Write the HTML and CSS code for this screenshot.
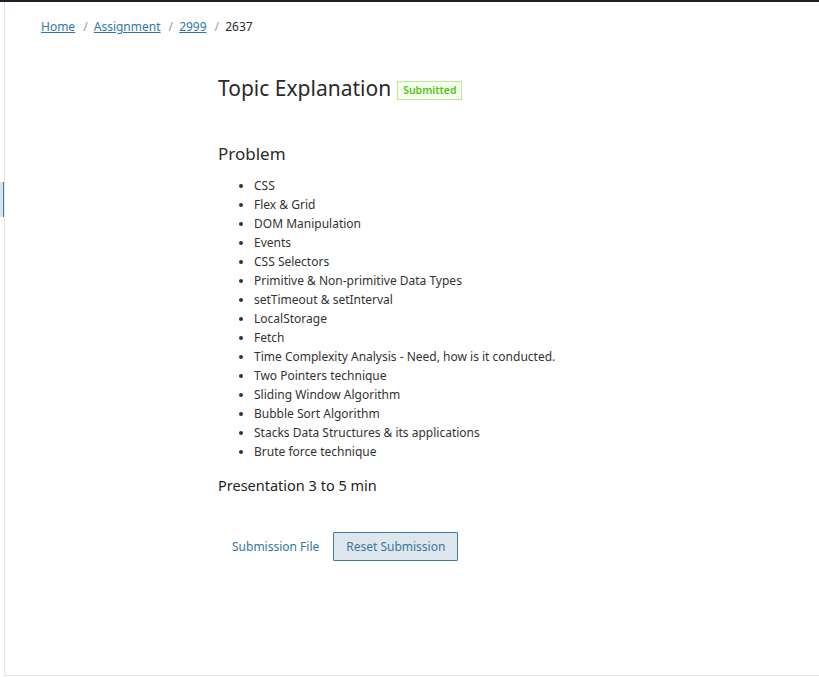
FILE: index.html
```html
<!DOCTYPE html>
<html>
<head>
<meta charset="utf-8">
<link rel="stylesheet" href="styles.css">
</head>
<body>
<div class="topbar"></div>
<div class="frame">
  <div class="side-tab"></div>
  <nav class="crumbs">
    <a href="#">Home</a><span class="sep">/</span>
    <a href="#">Assignment</a><span class="sep">/</span>
    <a href="#">2999</a><span class="sep">/</span>
    <span class="current">2637</span>
  </nav>
  <main class="content">
    <div class="title-row">
      <h1 class="title">Topic Explanation</h1>
      <span class="tag">Submitted</span>
    </div>
    <h2 class="section">Problem</h2>
    <ul class="topics">
      <li>CSS</li>
      <li>Flex &amp; Grid</li>
      <li>DOM Manipulation</li>
      <li>Events</li>
      <li>CSS Selectors</li>
      <li>Primitive &amp; Non-primitive Data Types</li>
      <li>setTimeout &amp; setInterval</li>
      <li>LocalStorage</li>
      <li>Fetch</li>
      <li>Time Complexity Analysis - Need, how is it conducted.</li>
      <li>Two Pointers technique</li>
      <li>Sliding Window Algorithm</li>
      <li>Bubble Sort Algorithm</li>
      <li>Stacks Data Structures &amp; its applications</li>
      <li>Brute force technique</li>
    </ul>
    <p class="duration">Presentation 3 to 5 min</p>
    <div class="actions">
      <button class="btn-link">Submission File</button>
      <button class="btn-reset">Reset Submission</button>
    </div>
  </main>
</div>
</body>
</html>
```

FILE: styles.css
```css
html, body {
  margin: 0;
  padding: 0;
  background: #ffffff;
}
body {
  font-family: "Noto Sans", "Open Sans", sans-serif;
  color: #2b2b2b;
  width: 819px;
  height: 677px;
  overflow: hidden;
}
.topbar {
  height: 2px;
  background: #1b2329;
}
.frame {
  position: relative;
  margin-left: 4px;
  height: 673px;
  border-left: 1px solid #e4e3f5;
  border-bottom: 1px solid #e6e6e6;
}
.side-tab {
  position: absolute;
  left: -5px;
  top: 180px;
  width: 3px;
  height: 35px;
  background: #d9e2e8;
  border-right: 1px solid #4a7a9a;
}
.crumbs {
  padding: 16px 0 0 36px;
  font-size: 12px;
  line-height: 18px;
  color: #2b2b2b;
}
.crumbs a {
  color: #2d78a8;
  text-decoration: underline;
}
.crumbs .sep {
  color: #9a9a9a;
  margin: 0 3px 0 8px;
}
.content {
  padding: 38px 0 0 213px;
}
.title-row {
  display: flex;
  align-items: center;
  gap: 6px;
}
.title {
  margin: 0;
  font-size: 21px;
  font-weight: 400;
  line-height: 28px;
  color: #2a2a2a;
}
.tag {
  font-size: 10.5px;
  font-weight: 600;
  color: #52c41a;
  background: #f6ffed;
  border: 1px solid #b7eb8f;
  padding: 0 5px;
  line-height: 17px;
  margin-top: 5px;
}
.section {
  margin: 40px 0 0;
  font-size: 17px;
  font-weight: 400;
  line-height: 24px;
  color: #2a2a2a;
}
.topics {
  margin: 10px 0 0;
  padding-left: 36px;
  font-size: 12px;
  line-height: 19px;
  color: #333;
}
.duration {
  margin: 14px 0 0;
  font-size: 14.5px;
  font-weight: 400;
  line-height: 20px;
  color: #1f1f1f;
}
.actions {
  display: flex;
  align-items: center;
  gap: 14px;
  margin-top: 37px;
  padding-left: 14px;
}
.btn-link {
  font-family: inherit;
  font-size: 12px;
  color: #3576a0;
  background: none;
  border: none;
  padding: 0;
}
.btn-reset {
  font-family: inherit;
  font-size: 12px;
  color: #3a77a0;
  background: #dde6ed;
  border: 1px solid #3f7ba3;
  border-radius: 1px;
  height: 29px;
  width: 125px;
  padding: 0;
}
```
